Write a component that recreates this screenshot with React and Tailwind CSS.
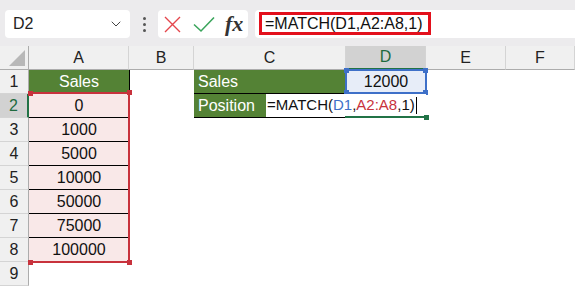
import { ChevronDown } from "lucide-react";

const font = { fontFamily: '"Liberation Sans", Arial, sans-serif' };
const gridCols = "grid grid-cols-[29px_100px_65px_152px_80px_80px_1fr]";

const ColHeader = ({ label, active }) => (
  <div
    className={`h-6 flex items-center justify-center border-r border-[#d4d4d4] text-[16px] ${
      active
        ? "bg-[#d2d2d2] text-[#1e6b3e] border-b-2 border-b-[#217346]"
        : "bg-[#f0f0f0] text-[#222] border-b border-b-[#acacac]"
    }`}
  >
    {label}
  </div>
);

const RowHeader = ({ n, active }) => (
  <div
    className={`h-6 flex items-center justify-center border-b border-[#d4d4d4] text-[16px] ${
      active
        ? "bg-[#d2d2d2] text-[#1e6b3e] border-r-2 border-r-[#217346]"
        : "bg-[#f0f0f0] text-[#222] border-r border-r-[#acacac]"
    }`}
  >
    {n}
  </div>
);

const Dot = ({ className }) => (
  <div className={`absolute w-[5px] h-[5px] ${className}`} />
);

export default function App() {
  const sales = ["0", "1000", "5000", "10000", "50000", "75000", "100000"];

  return (
    <div className="w-[575px] h-[288px] overflow-hidden bg-white text-[#111]" style={font}>
      {/* formula bar */}
      <div className="h-[46px] bg-[#ecebed] pt-[10px] pr-0 pl-[5px] flex items-start">
        <div className="w-[125px] h-[28px] bg-white rounded-[4px] flex items-center justify-between pl-[8px] pr-[6px]">
          <span className="text-[16px] text-[#222]">D2</span>
          <ChevronDown size={16} strokeWidth={1.5} className="text-[#444]" />
        </div>
        <div className="w-[28px] h-[28px] flex flex-col items-center justify-center gap-[3px]">
          <div className="w-[3px] h-[3px] rounded-full bg-[#555]" />
          <div className="w-[3px] h-[3px] rounded-full bg-[#555]" />
          <div className="w-[3px] h-[3px] rounded-full bg-[#555]" />
        </div>
        <div className="w-[90px] h-[28px] bg-white rounded-[4px] flex items-center pl-[5px]">
          <svg width="19" height="17" viewBox="0 0 19 17" className="mr-[11px]">
            <path d="M2 1L17 16M17 1L2 16" stroke="#e4464c" strokeWidth="1.4" fill="none" />
          </svg>
          <svg width="22" height="17" viewBox="0 0 22 17" className="mr-[10px]">
            <path d="M1 8.5L8 15L21 1.5" stroke="#3ba55c" strokeWidth="1.6" fill="none" />
          </svg>
          <span
            className="text-[22px] italic font-bold text-[#333] leading-none"
            style={{ fontFamily: '"Liberation Serif", "Times New Roman", serif' }}
          >
            fx
          </span>
        </div>
        <div className="ml-[7px] flex-1 h-[28px] bg-white rounded-l-[4px] pt-[2px] pl-[4px]">
          <div className="w-[172px] h-[23px] border-[3px] border-[#e3101c] flex items-center pl-[3px] text-[16px] leading-none text-[#111]">
            =MATCH(D1,A2:A8,1)
          </div>
        </div>
      </div>

      {/* sheet */}
      <div className="relative">
        <div className={gridCols}>
          <div className="h-6 bg-[#f0f0f0] border-r border-[#acacac] border-b border-b-[#acacac] relative">
            <svg width="16" height="16" className="absolute right-[3px] bottom-[3px]">
              <path d="M16 0L16 16L0 16Z" fill="#b8b8b8" />
            </svg>
          </div>
          <ColHeader label="A" />
          <ColHeader label="B" />
          <ColHeader label="C" />
          <ColHeader label="D" active />
          <ColHeader label="E" />
          <ColHeader label="F" />

          {/* row 1 */}
          <RowHeader n="1" />
          <div className="h-6 bg-[#548235] text-white text-[16px] flex items-center justify-center">Sales</div>
          <div className="h-6 border-l border-black" />
          <div className="h-6 bg-[#548235] text-white text-[16px] flex items-center pl-[4px] border-b border-black">Sales</div>
          <div className="h-6 bg-[#e7edf8] text-[16px] flex items-center justify-center">12000</div>
          <div className="h-6" />
          <div className="h-6" />

          {/* row 2 */}
          <RowHeader n="2" active />
          <div className="h-6 bg-[#f9e8e8] text-[16px] flex items-center justify-center border-b border-black">{sales[0]}</div>
          <div className="h-6 border-l border-black" />
          <div className="h-6 bg-[#548235] text-white text-[16px] flex items-center pl-[4px] border-b border-black">Position</div>
          <div className="h-6" />
          <div className="h-6" />
          <div className="h-6" />

          {sales.slice(1).map((v, i) => (
            <div key={v} className="contents">
              <RowHeader n={String(i + 3)} />
              <div
                className={`h-6 bg-[#f9e8e8] text-[16px] flex items-center justify-center ${
                  i < 5 ? "border-b border-black" : ""
                }`}
              >
                {v}
              </div>
              <div className="h-6" />
              <div className="h-6" />
              <div className="h-6" />
              <div className="h-6" />
              <div className="h-6" />
            </div>
          ))}

          <RowHeader n="9" />
          <div className="h-6" />
          <div className="h-6" />
          <div className="h-6" />
          <div className="h-6" />
          <div className="h-6" />
          <div className="h-6" />
        </div>

        {/* A2:A8 reference range */}
        <div className="absolute left-[29px] top-[46px] w-[101px] h-[171px] border-t-2 border-r-2 border-b-2 border-[#c8323c]">
          <Dot className="-left-[1px] -top-[3px] bg-[#c8323c]" />
          <Dot className="-right-[4px] -top-[4px] bg-[#c8323c]" />
          <Dot className="-left-[1px] -bottom-[4px] bg-[#c8323c]" />
          <Dot className="-right-[4px] -bottom-[4px] bg-[#c8323c]" />
        </div>

        {/* D1 reference range */}
        <div className="absolute left-[345px] top-[23px] w-[82px] h-[25px] border-2 border-[#3e70c8]">
          <Dot className="-left-[3px] -top-[3px] bg-[#3e70c8]" />
          <Dot className="-right-[3px] -top-[3px] bg-[#3e70c8]" />
          <Dot className="-left-[3px] -bottom-[3px] bg-[#3e70c8]" />
          <Dot className="-right-[3px] -bottom-[3px] bg-[#3e70c8]" />
        </div>

        {/* in-cell editor for D2 */}
        <div className="absolute left-[266px] top-[48px] w-[160px] h-[23px] bg-white flex items-center pl-[1px] text-[15px] whitespace-nowrap">
          <span>=MATCH(</span>
          <span className="text-[#3e70c8]">D1</span>
          <span>,</span>
          <span className="text-[#c8323c]">A2:A8</span>
          <span>,1)</span>
          <span className="ml-[1px] w-px h-[17px] bg-black" />
        </div>
        <div className="absolute left-[266px] top-[71px] w-[79px] h-px bg-black" />
        <div className="absolute left-[345px] top-[70px] w-[81px] h-[2px] bg-[#217346]" />
        <Dot className="left-[424px] top-[69px] bg-[#217346]" />
      </div>
    </div>
  );
}
